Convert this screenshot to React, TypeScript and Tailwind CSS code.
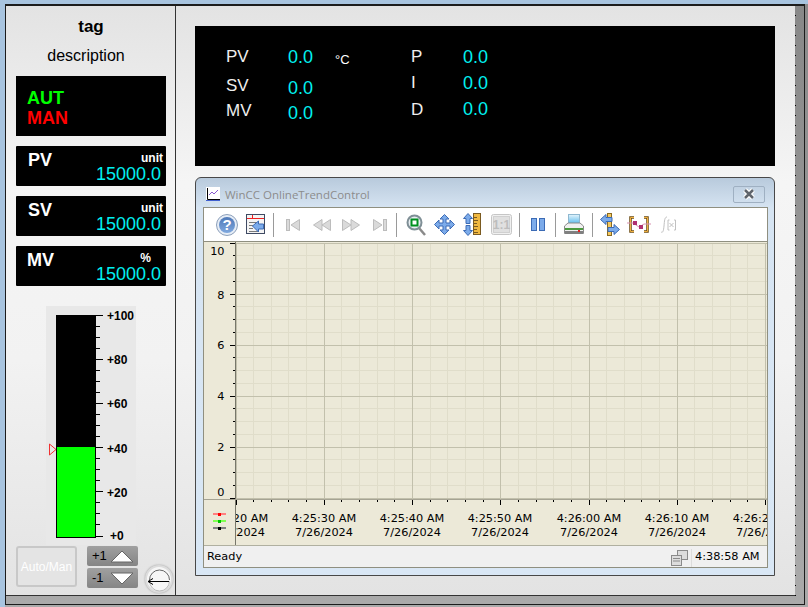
const minorX = Array.from({ length: 31 }, (_, i) => Math.floor(32 + i * 17.65) + 0.5);
const minorY = Array.from({ length: 21 }, (_, i) => Math.floor(1 + i * 12.75) + 0.5);
const times = [
  ["4:25:20 AM", 32],
  ["4:25:30 AM", 120],
  ["4:25:40 AM", 208],
  ["4:25:50 AM", 296],
  ["4:26:00 AM", 385],
  ["4:26:10 AM", 473],
  ["4:26:20 AM", 561],
] as const;

const TrendChart = () => (
  <svg width="563" height="303" className="block" style={{ fontFamily: "'DejaVu Sans', sans-serif" }}>
    <rect width="563" height="303" fill="#ece9d8" />
    {minorX.map((x) => (
      <line key={x} x1={x} x2={x} y1="1" y2="257" stroke="#e0ddca" />
    ))}
    {minorY.map((y) => (
      <line key={y} x1="32" x2="563" y1={y} y2={y} stroke="#e0ddca" />
    ))}
    {minorX.filter((_, i) => i % 5 === 0).map((x) => (
      <line key={x} x1={x} x2={x} y1="1" y2="257" stroke="#c2c0ac" />
    ))}
    {minorY.filter((_, i) => i % 4 === 0).map((y) => (
      <line key={y} x1="32" x2="563" y1={y} y2={y} stroke="#c2c0ac" />
    ))}
    <rect x="0" y="0" width="31" height="303" fill="#ece9d8" />
    <rect x="32" y="258" width="531" height="45" fill="#ece9d8" />
    <line x1="31.5" x2="31.5" y1="0" y2="303" stroke="#77776a" />
    <line x1="0" x2="563" y1="257.5" y2="257.5" stroke="#a5a393" />
    {minorY.map((y, i) => (
      <line key={y} x1={i % 4 === 0 ? 26 : 29} x2="31" y1={y} y2={y} stroke="#000" />
    ))}
    {minorX.map((x, i) => (
      <line key={x} x1={x} x2={x} y1="258" y2={i % 5 === 0 ? 263 : 260} stroke="#000" />
    ))}
    {[
      ["10", 13],
      ["8", 57],
      ["6", 107],
      ["4", 158],
      ["2", 209],
      ["0", 254],
    ].map(([t, y]) => (
      <text key={t} x="20.5" y={y} textAnchor="end" fontSize="11.3" fill="#000">
        {t}
      </text>
    ))}
    <svg x="32" y="258" width="531" height="45">
      {times.map(([t, x]) => (
        <g key={t} textAnchor="middle" fontSize="11.3" fill="#000">
          <text x={x - 32} y="22">{t}</text>
          <text x={x - 32} y="36">7/26/2024</text>
        </g>
      ))}
    </svg>
    {[
      ["#ff8080", "#ff0000", 272],
      ["#80ff50", "#00c000", 279],
      ["#808080", "#000000", 286],
    ].map(([a, b, y]) => (
      <g key={a as string}>
        <rect x="9" y={(y as number) - 1} width="13" height="2" fill={a as string} />
        <rect x="14" y={(y as number) - 1} width="3" height="3" fill={b as string} />
      </g>
    ))}
  </svg>
);

const Blue = { fill: "#7cabea", stroke: "#3c6bb5", strokeWidth: 1 };
const Nav = { fill: "#dadada", stroke: "#bcbcbc", strokeWidth: 1 };

const Sep = ({ cls }: { cls: string }) => <div className={`w-px h-[24px] bg-[#9a9a9a] ${cls}`} />;

const Cell = ({ cls, children }: { cls: string; children: React.ReactNode }) => (
  <div className={`flex justify-center items-center h-full shrink-0 ${cls}`}>{children}</div>
);

const Toolbar = () => (
  <div className="h-[34px] bg-white flex items-center pl-[12px] border-b border-[#8f8f80]">
    <Cell cls="w-[22px]">
      <svg width="22" height="22">
        <defs>
          <linearGradient id="helpG" x1="0" y1="0" x2="0" y2="1">
            <stop offset="0" stopColor="#4f79b8" />
            <stop offset="1" stopColor="#7fa8de" />
          </linearGradient>
        </defs>
        <circle cx="11" cy="11" r="10.5" fill="#e6edf6" stroke="#8c9fba" />
        <circle cx="11" cy="11" r="8" fill="url(#helpG)" />
        <text x="11" y="16" textAnchor="middle" fontSize="15" fontWeight="700" fill="#fff" fontFamily="Liberation Sans">?</text>
      </svg>
    </Cell>
    <Cell cls="w-[20px] ml-[8px]">
      <svg width="20" height="21">
        <rect x="0.500" y="0.500" width="18" height="19" fill="#f4f4f4" stroke="#3f4a63" />
        <line x1="1" x2="18" y1="4.500" y2="4.500" stroke="#f02020" />
        <line x1="6.500" x2="6.500" y1="1" y2="4" stroke="#f02020" />
        <path d="M3 8.500h8M3 11.500h4M3 14.500h4M3 17.500h9" stroke="#7a7a7a" />
        <path d="M6.500 12l6-5v3h5v5h-5v3z" {...Blue} />
      </svg>
    </Cell>
    <Sep cls="ml-[7px]" />
    <Cell cls="w-[29px] ml-[4px]">
      <svg width="16" height="14">
        <rect x="1.500" y="1.500" width="3" height="11" {...Nav} />
        <path d="M14.500 1.500v11L6 7z" {...Nav} />
      </svg>
    </Cell>
    <Cell cls="w-[29px]">
      <svg width="20" height="14">
        <path d="M10 1.500v11L1.500 7zM18.500 1.500v11L10 7z" {...Nav} />
      </svg>
    </Cell>
    <Cell cls="w-[29px]">
      <svg width="20" height="14">
        <path d="M1.500 1.500v11L10 7zM10 1.500v11L18.500 7z" {...Nav} />
      </svg>
    </Cell>
    <Cell cls="w-[29px]">
      <svg width="16" height="14">
        <rect x="11.500" y="1.500" width="3" height="11" {...Nav} />
        <path d="M1.500 1.500v11L10 7z" {...Nav} />
      </svg>
    </Cell>
    <Sep cls="ml-[2px]" />
    <Cell cls="w-[29px] ml-[4px]">
      <svg width="20" height="22">
        <line x1="13" y1="14" x2="19" y2="21" stroke="#8a8a8a" strokeWidth="2.500" />
        <circle cx="8.500" cy="8.500" r="7" fill="#e8eef2" stroke="#7f8f96" strokeWidth="2" />
        <rect x="5.500" y="5.500" width="6" height="6" fill="#fff" stroke="#009020" strokeWidth="2" />
      </svg>
    </Cell>
    <Cell cls="w-[28px]">
      <svg width="21" height="21">
        <path d="M10.500 0.500l4.500 4.500h-3v4h4V6l4.500 4.500-4.500 4.500v-3h-4v4h3l-4.500 4.500L6 16h3v-4H5v3L0.500 10.500 5 6v3h4V5H6z" {...Blue} />
      </svg>
    </Cell>
    <Cell cls="w-[28px]">
      <svg width="18" height="23">
        <path d="M5 0.500l4.500 5H7v5H3v-5H0.500z" {...Blue} />
        <path d="M5 22.500l4.500-5H7v-5H3v5H0.500z" {...Blue} />
        <rect x="10.500" y="0.500" width="7" height="21" fill="#f0b840" stroke="#7a5a20" />
        <path d="M11 4.500h3M11 7.500h4M11 10.500h3M11 13.500h4M11 16.500h3M11 19.500h4" stroke="#7a5a20" />
      </svg>
    </Cell>
    <Cell cls="w-[29px] ml-px">
      <svg width="21" height="21">
        <rect x="0.500" y="0.500" width="20" height="20" rx="2" fill="#f0f0f0" stroke="#c6c6c6" />
        <rect x="2.500" y="2.500" width="16" height="16" fill="#e0e0e0" stroke="#d0d0d0" />
        <text x="10.500" y="15" textAnchor="middle" fontSize="12" fontWeight="700" fill="#bdbdbd" fontFamily="Liberation Sans">1:1</text>
      </svg>
    </Cell>
    <Sep cls="ml-[3px]" />
    <Cell cls="w-[35px]">
      <svg width="14" height="13">
        <rect x="0.500" y="0.500" width="5" height="12" {...Blue} />
        <rect x="8.500" y="0.500" width="5" height="12" {...Blue} />
      </svg>
    </Cell>
    <Sep cls="" />
    <Cell cls="w-[36px]">
      <svg width="20" height="22">
        <defs>
          <linearGradient id="paperG" x1="0" y1="0" x2="0" y2="1">
            <stop offset="0" stopColor="#e4f4fc" />
            <stop offset="1" stopColor="#40b0ea" />
          </linearGradient>
        </defs>
        <rect x="4.500" y="0.500" width="11" height="11" fill="url(#paperG)" stroke="#8fb8d0" />
        <path d="M0.500 12l3.500-3h12l3.500 3v7.500h-19z" fill="#f0f0f0" stroke="#8a8a8a" />
        <rect x="1" y="14" width="18" height="2" fill="#4c9a40" />
        <rect x="1" y="17" width="18" height="3" fill="#808080" />
        <rect x="14" y="16" width="2" height="2" fill="#e02020" />
      </svg>
    </Cell>
    <Sep cls="" />
    <Cell cls="w-[34px]">
      <svg width="20" height="23">
        <rect x="7.500" y="0.500" width="4" height="22" fill="#f4c860" stroke="#8a6a20" />
        <path d="M0.500 6.500l5.500-5v3h6v4h-6v3z" {...Blue} />
        <path d="M19.500 16.500l-5.500-5v3H8v4h6v3z" {...Blue} />
      </svg>
    </Cell>
    <Cell cls="w-[24px]">
      <svg width="24" height="17">
        <path d="M7 1.500H3.500v14H7M17 1.500h3.500v14H17" fill="none" stroke="#6a4a10" strokeWidth="2.500" />
        <path d="M7 1.500H3.500v14H7M17 1.500h3.500v14H17" fill="none" stroke="#f0b040" strokeWidth="1" />
        <path d="M0 7h6l6 4 5-3h7" fill="none" stroke="#d890b0" />
        <rect x="6" y="5" width="4" height="4" fill="#b03070" />
        <rect x="12" y="9" width="4" height="4" fill="#b03070" />
      </svg>
    </Cell>
    <Cell cls="w-[16px] ml-[9px]">
      <svg width="17" height="17" fill="none" stroke="#c0c0c0">
        <path d="M1 16c2 1 2.500-1 3-6s.500-9 3-9" />
        <path d="M9.500 4H8v10h1.500M14 4h1.500v10H14M9.500 7l4 4M13.500 7l-4 4" />
      </svg>
    </Cell>
  </div>
);

const TrendWindow = () => (
  <div className="mt-[11px] w-[580px] h-[399px] rounded-t-[6px] border border-[#484848] bg-[linear-gradient(to_bottom,#b8cadc_0px,#d6e4f2_30px,#d9e7f5_100%)] font-['Open_Sans',sans-serif]">
    <div className="h-[29px] flex items-center pl-[10px] pr-[9px] pt-[3px]">
      <svg width="14" height="14" className="mr-[5px]">
        <rect width="14" height="14" fill="#fff" />
        <path d="M1.500 1v11.500H14" fill="none" stroke="#000" />
        <path d="M3 8l3-3 2 2 4-4" fill="none" stroke="#8a5ad0" />
        <line x1="0" x2="14" y1="13.500" y2="13.500" stroke="#4060d0" />
      </svg>
      <span className="text-[11.5px] leading-none text-[#8c8c8c] mt-[2px]">WinCC OnlineTrendControl</span>
      <div className="ml-auto w-[32px] h-[17px] rounded-[2px] border border-[#9fb0c2] flex items-center justify-center">
        <svg width="14" height="12">
          <path d="M3 2l8 8M11 2l-8 8" stroke="#fff" strokeWidth="5" />
          <path d="M3 2l8 8M11 2l-8 8" stroke="#60656c" strokeWidth="2.500" />
        </svg>
      </div>
    </div>
    <div className="mx-[7px] border border-[#8f8f80] w-[565px]">
      <Toolbar />
      <TrendChart />
      <div className="h-[22px] bg-[#f0f0f0] border-t border-[#b0b0a0] flex items-center text-black pl-[3px] pt-[2px]" style={{ fontFamily: "'DejaVu Sans', sans-serif", fontSize: 11.3 }}>
        <span>Ready</span>
        <svg width="17" height="16" className="ml-auto" fill="#dcdcdc" stroke="#8a8a8a">
          <rect x="6.500" y="0.500" width="10" height="9" />
          <rect x="0.500" y="5.500" width="10" height="10" />
          <path d="M2 8.500h7M2 11h7" />
        </svg>
        <div className="w-px h-[18px] bg-[#dcdcdc] ml-[3px]" />
        <span className="ml-[3px] w-[72px]">4:38:58 AM</span>
      </div>
    </div>
  </div>
);

const ReadBox = ({ label, unit, unitCls, labelCls }: { label: string; unit: string; unitCls: string; labelCls: string }) => (
  <div className="h-[40px] bg-black flex justify-between rounded-[1px]">
    <span className={`text-[18px] font-bold text-white leading-none mt-[5px] ${labelCls}`}>{label}</span>
    <div className="flex flex-col items-end pr-[5px]">
      <span className={`text-[12px] font-bold text-white leading-none mt-[6px] ${unitCls}`}>{unit}</span>
      <span className="text-[18px] text-[#00f0f0] leading-none mt-[1px]">15000.0</span>
    </div>
  </div>
);

const Scale = () => {
  const ticks = Array.from({ length: 21 }, (_, i) => i);
  return (
    <svg width="40" height="236" className="block" style={{ fontFamily: "'Liberation Sans', sans-serif" }}>
      {ticks.map((i) => (
        <line
          key={i}
          x1="0"
          x2={i % 4 === 0 ? 7 : 4}
          y1={Math.floor(6 + i * 11.05) + 0.5}
          y2={Math.floor(6 + i * 11.05) + 0.5}
          stroke="#000"
        />
      ))}
      {[100, 80, 60, 40, 20].map((v, i) => (
        <text key={v} x="11" y={11 + i * 44.2} fontSize="12" fontWeight="700" fill="#000">
          +{v}
        </text>
      ))}
      <text x="14" y="231" fontSize="12" fontWeight="700" fill="#000">+0</text>
    </svg>
  );
};

const LeftPanel = () => (
  <div className="w-[170px] h-full border-r border-[#333] pl-[10px] flex flex-col">
    <div className="w-[150px] h-[30px] pt-[11px] text-center text-[17px] font-bold leading-[20px] text-black">tag</div>
    <div className="w-[140px] text-center text-[16px] leading-[18px] mt-[11px] text-black">description</div>
    <div className="w-[150px] h-[60px] bg-black mt-[11px] pl-[11px] pt-[12px] text-[18px] font-bold leading-[20px]">
      <div className="text-[#00ff00]">AUT</div>
      <div className="text-[#ff0000]">MAN</div>
    </div>
    <div className="w-[150px] mt-[10px] flex flex-col gap-[10px]">
      <ReadBox label="PV" unit="unit" unitCls="mr-[-2px]" labelCls="ml-[12px]" />
      <ReadBox label="SV" unit="unit" unitCls="mr-[-2px]" labelCls="ml-[12px]" />
      <ReadBox label="MV" unit="%" unitCls="mr-[10px]" labelCls="ml-[11px]" />
    </div>
    <div className="relative w-[90px] h-[239px] ml-[30px] mt-[20px] bg-[#e8e8e8] pl-[10px] pt-[3px] flex items-start">
      <div className="w-[40px] h-[223px] mt-[6px] bg-black flex flex-col justify-end">
        <div className="h-[90px] mx-px mb-px bg-[#00ff00]" />
      </div>
      <Scale />
      <svg width="8" height="13" className="absolute left-[3px] top-[137px]">
        <path d="M0.500 1v11l6.500-5.500z" fill="none" stroke="#f03030" />
      </svg>
    </div>
    <div className="flex mt-px">
      <div className="w-[61px] h-[41px] bg-[#e4e4e4] border-2 border-[#c8c8c8] rounded-[3px] flex items-center justify-center text-white text-[12px]">
        Auto/Man
      </div>
      <div className="ml-[10px] w-[51px] flex flex-col gap-[2px]">
        {[
          ["+1", "M2 14L13 3l11 11z"],
          ["-1", "M2 3l11 11L24 3z"],
        ].map(([t, d]) => (
          <div key={t} className="h-[20px] bg-[linear-gradient(to_bottom,#a0a0a0,#858585)] rounded-[2px] flex items-center pl-[5px] pr-[3px] text-[13px] text-black">
            <span>{t}</span>
            <svg width="26" height="17" className="ml-auto">
              <path d={d} fill="#fff" stroke="#666" />
            </svg>
          </div>
        ))}
      </div>
      <div className="ml-[7px] mt-[19px] w-[28px] h-[28px] rounded-full bg-[#f6f6f6] border-2 border-[#dcdcdc] shadow-[0_0_2px_#999] flex items-center justify-center shrink-0">
        <svg width="24" height="24" className="overflow-visible">
          <path d="M2.500 13a10 10 0 0 1 20 0" fill="none" stroke="#666" />
          <path d="M2.500 14a10 10 0 0 0 20 0" fill="none" stroke="#bbb" />
          <path d="M1 14.500h21M1 14.500l5-3M1 14.500l5 3" fill="none" stroke="#000" />
        </svg>
      </div>
    </div>
  </div>
);

const Row = ({ label, value, labelCls, valueCls }: { label: string; value: string; labelCls: string; valueCls: string }) => (
  <div className="flex items-start">
    <span className={`text-[17px] leading-[20px] text-[#eeeeee] ${labelCls}`}>{label}</span>
    <span className={`text-[18px] leading-[20px] text-[#00f0f0] ${valueCls}`}>{value}</span>
  </div>
);

const PidPanel = () => (
  <div className="w-[580px] h-[140px] bg-black flex pl-[31px] pt-[21px]">
    <div className="w-[185px] flex flex-col">
      <div className="flex items-start">
        <Row label="PV" value="0.0" labelCls="w-[62px]" valueCls="" />
        <span className="text-[13px] leading-[20px] text-white ml-[22px] mt-[3px]">°C</span>
      </div>
      <div className="mt-[6px]"><Row label="SV" value="0.0" labelCls="w-[62px]" valueCls="mt-[2px]" /></div>
      <div className="mt-[3px]"><Row label="MV" value="0.0" labelCls="w-[62px]" valueCls="mt-[2px]" /></div>
    </div>
    <div className="flex flex-col gap-[6px]">
      <Row label="P" value="0.0" labelCls="w-[52px]" valueCls="" />
      <Row label="I" value="0.0" labelCls="w-[52px]" valueCls="" />
      <Row label="D" value="0.0" labelCls="w-[52px] mt-px" valueCls="" />
    </div>
  </div>
);

export default function App() {
  return (
    <div className="w-[808px] h-[607px] overflow-hidden flex flex-col bg-[linear-gradient(to_bottom,#8a8a8a,#aaaaaa)] font-['Liberation_Sans',sans-serif]">
      <div className="h-[4px] bg-[#a8c4df] shrink-0" />
      <div className="flex">
        <div className="w-[5px] h-[603px] bg-[#a8c4df]" />
        <div className="w-[800px] h-[601px] border-t-2 border-x border-b border-[#1c1c1c] flex bg-[linear-gradient(to_bottom,#888888,#aaaaaa)]">
          <div className="w-[789px] h-[590px] border-b border-[#333] flex bg-[linear-gradient(to_bottom,#e3e3e3,#f5f5f5_30%,#f2f2f2_60%,#e3e3e3)]">
            <LeftPanel />
            <div className="pl-[19px] pt-[20px]">
              <PidPanel />
              <TrendWindow />
            </div>
          </div>
          <div className="w-px h-[590px] bg-[repeating-linear-gradient(to_bottom,transparent_0,transparent_9px,#000_9px,#000_10px)]" />
        </div>
      </div>
    </div>
  );
}
